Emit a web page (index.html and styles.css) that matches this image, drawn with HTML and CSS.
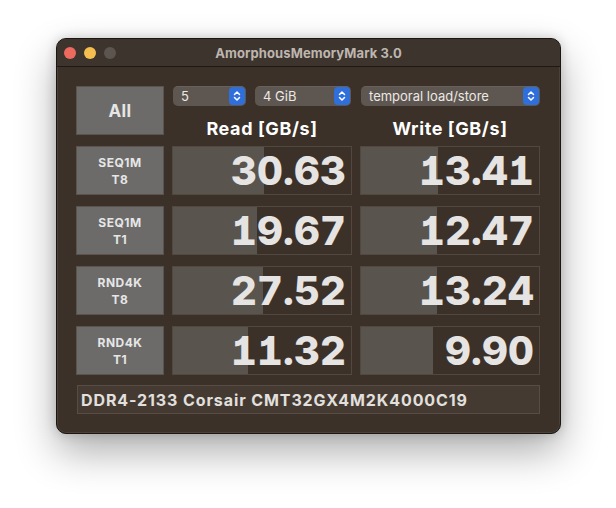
FILE: index.html
```html
<!DOCTYPE html>
<html>
<head>
<meta charset="utf-8">
<link rel="stylesheet" href="styles.css">
</head>
<body>
<div class="window">
  <div class="titlebar">
    <div class="lights">
      <span class="light red"></span>
      <span class="light yellow"></span>
      <span class="light gray"></span>
    </div>
    <div class="title">AmorphousMemoryMark 3.0</div>
  </div>
  <div class="content">
    <div class="grid">
      <div class="btn all">All</div>
      <div class="head">
        <div class="popups">
          <div class="popup p1"><span>5</span><i class="stepper"><svg width="10" height="14" viewBox="0 0 10 14"><path d="M2.5 5.5 L5 3 L7.5 5.5 M2.5 8.5 L5 11 L7.5 8.5" fill="none" stroke="#fff" stroke-width="1.5" stroke-linecap="round" stroke-linejoin="round"/></svg></i></div>
          <div class="popup p2"><span>4 GiB</span><i class="stepper"><svg width="10" height="14" viewBox="0 0 10 14"><path d="M2.5 5.5 L5 3 L7.5 5.5 M2.5 8.5 L5 11 L7.5 8.5" fill="none" stroke="#fff" stroke-width="1.5" stroke-linecap="round" stroke-linejoin="round"/></svg></i></div>
        </div>
        <div class="colhead">Read [GB/s]</div>
      </div>
      <div class="head">
        <div class="popups">
          <div class="popup p3"><span>temporal load/store</span><i class="stepper"><svg width="10" height="14" viewBox="0 0 10 14"><path d="M2.5 5.5 L5 3 L7.5 5.5 M2.5 8.5 L5 11 L7.5 8.5" fill="none" stroke="#fff" stroke-width="1.5" stroke-linecap="round" stroke-linejoin="round"/></svg></i></div>
        </div>
        <div class="colhead">Write [GB/s]</div>
      </div>

      <div class="btn label">SEQ1M<br>T8</div>
      <div class="cell"><div class="fill" style="width:91px"></div><span class="num">30.63</span></div>
      <div class="cell"><div class="fill" style="width:77px"></div><span class="num">13.41</span></div>

      <div class="btn label">SEQ1M<br>T1</div>
      <div class="cell"><div class="fill" style="width:84px"></div><span class="num">19.67</span></div>
      <div class="cell"><div class="fill" style="width:76px"></div><span class="num">12.47</span></div>

      <div class="btn label">RND4K<br>T8</div>
      <div class="cell"><div class="fill" style="width:90px"></div><span class="num">27.52</span></div>
      <div class="cell"><div class="fill" style="width:76px"></div><span class="num">13.24</span></div>

      <div class="btn label">RND4K<br>T1</div>
      <div class="cell"><div class="fill" style="width:75px"></div><span class="num">11.32</span></div>
      <div class="cell"><div class="fill" style="width:72px"></div><span class="num">9.90</span></div>

      <div class="footer">DDR4-2133 Corsair CMT32GX4M2K4000C19</div>
    </div>
  </div>
</div>
</body>
</html>
```

FILE: styles.css
```css
* { box-sizing: border-box; }
html, body { margin: 0; padding: 0; }
body {
  background: #ffffff;
  width: 616px;
  height: 508px;
  font-family: Inter, "Liberation Sans", sans-serif;
  padding-top: 38px;
  padding-left: 56px;
}
.window {
  width: 505px;
  height: 396px;
  border-radius: 10px;
  background: #3b3129;
  border: 1px solid #1a1612;
  box-shadow: 0 18px 40px rgba(0,0,0,0.32), 0 0 12px rgba(0,0,0,0.18), inset 0 0 0 1px rgba(255,255,255,0.08);
  overflow: hidden;
  display: flex;
  flex-direction: column;
}
.titlebar {
  height: 28px;
  flex: none;
  background: #3d342d;
  border-bottom: 1px solid #1d1915;
  display: flex;
  align-items: center;
  position: relative;
}
.lights {
  display: flex;
  gap: 8px;
  padding-left: 7px;
  padding-top: 1px;
}
.light {
  width: 12px;
  height: 12px;
  border-radius: 50%;
  display: block;
}
.red { background: #ed6a5e; }
.yellow { background: #f4bf4f; }
.gray { background: #5c554f; }
.title {
  position: absolute;
  left: 0; right: 0;
  top: 6px;
  text-align: center;
  font-size: 13px;
  font-weight: 700;
  color: #bdb6b0;
  letter-spacing: 0.1px;
}
.content {
  padding: 19px 20px 0 19px;
}
.grid {
  display: grid;
  grid-template-columns: 88px 180px 180px;
  grid-template-rows: 49px 49px 49px 49px 49px 28px;
  column-gap: 8px;
  row-gap: 11px;
}
.grid .footer { margin-top: -1px; }
.btn {
  background: #6c6b6a;
  border: 1px solid #5a544e;
  color: #e6e6e6;
  font-weight: 700;
  display: flex;
  align-items: center;
  justify-content: center;
  text-align: center;
}
.all { font-size: 17px; letter-spacing: 0.3px; }
.label { font-size: 12px; line-height: 17px; letter-spacing: 0.5px; }
.head {
  display: flex;
  flex-direction: column;
}
.popups {
  display: flex;
  gap: 9px;
  height: 20px;
  padding-left: 1px;
}
.popup {
  height: 20px;
  background: #5e5751;
  border-radius: 5px;
  display: flex;
  align-items: center;
  justify-content: space-between;
  padding: 0 1px 0 8px;
  color: #ece8e4;
  font-size: 13px;
  box-shadow: inset 0 0.5px 0 rgba(255,255,255,0.12);
}
.p1 { width: 73px; }
.p2 { width: 96px; }
.p3 { width: 179px; }
.stepper {
  width: 16px;
  height: 18px;
  border-radius: 4px;
  background: #2f6fdb;
  display: flex;
  align-items: center;
  justify-content: center;
}
.colhead {
  flex: 1;
  display: flex;
  align-items: center;
  justify-content: center;
  font-size: 18px;
  font-weight: 700;
  color: #ffffff;
  padding-top: 12px;
  letter-spacing: 0.6px;
}
.cell {
  position: relative;
  border: 1px solid #51483f;
  background: #3b3129;
  display: flex;
  align-items: center;
  justify-content: flex-end;
  padding-right: 5px;
}
.fill {
  position: absolute;
  left: 0; top: 0; bottom: 0;
  background: #5a544e;
}
.num {
  position: relative;
  font-size: 40px;
  font-weight: 800;
  color: #e6e4e2;
  letter-spacing: 0.2px;
  line-height: 1;
  font-feature-settings: "tnum" 1, "cv01" 1;
}
.footer {
  grid-column: 1 / 4;
  margin-left: 1px;
  border: 1px solid #574d44;
  background: #443a32;
  color: #e2e0de;
  font-weight: 700;
  font-size: 16px;
  letter-spacing: 0.9px;
  display: flex;
  align-items: center;
  padding-left: 3px;
}
```
